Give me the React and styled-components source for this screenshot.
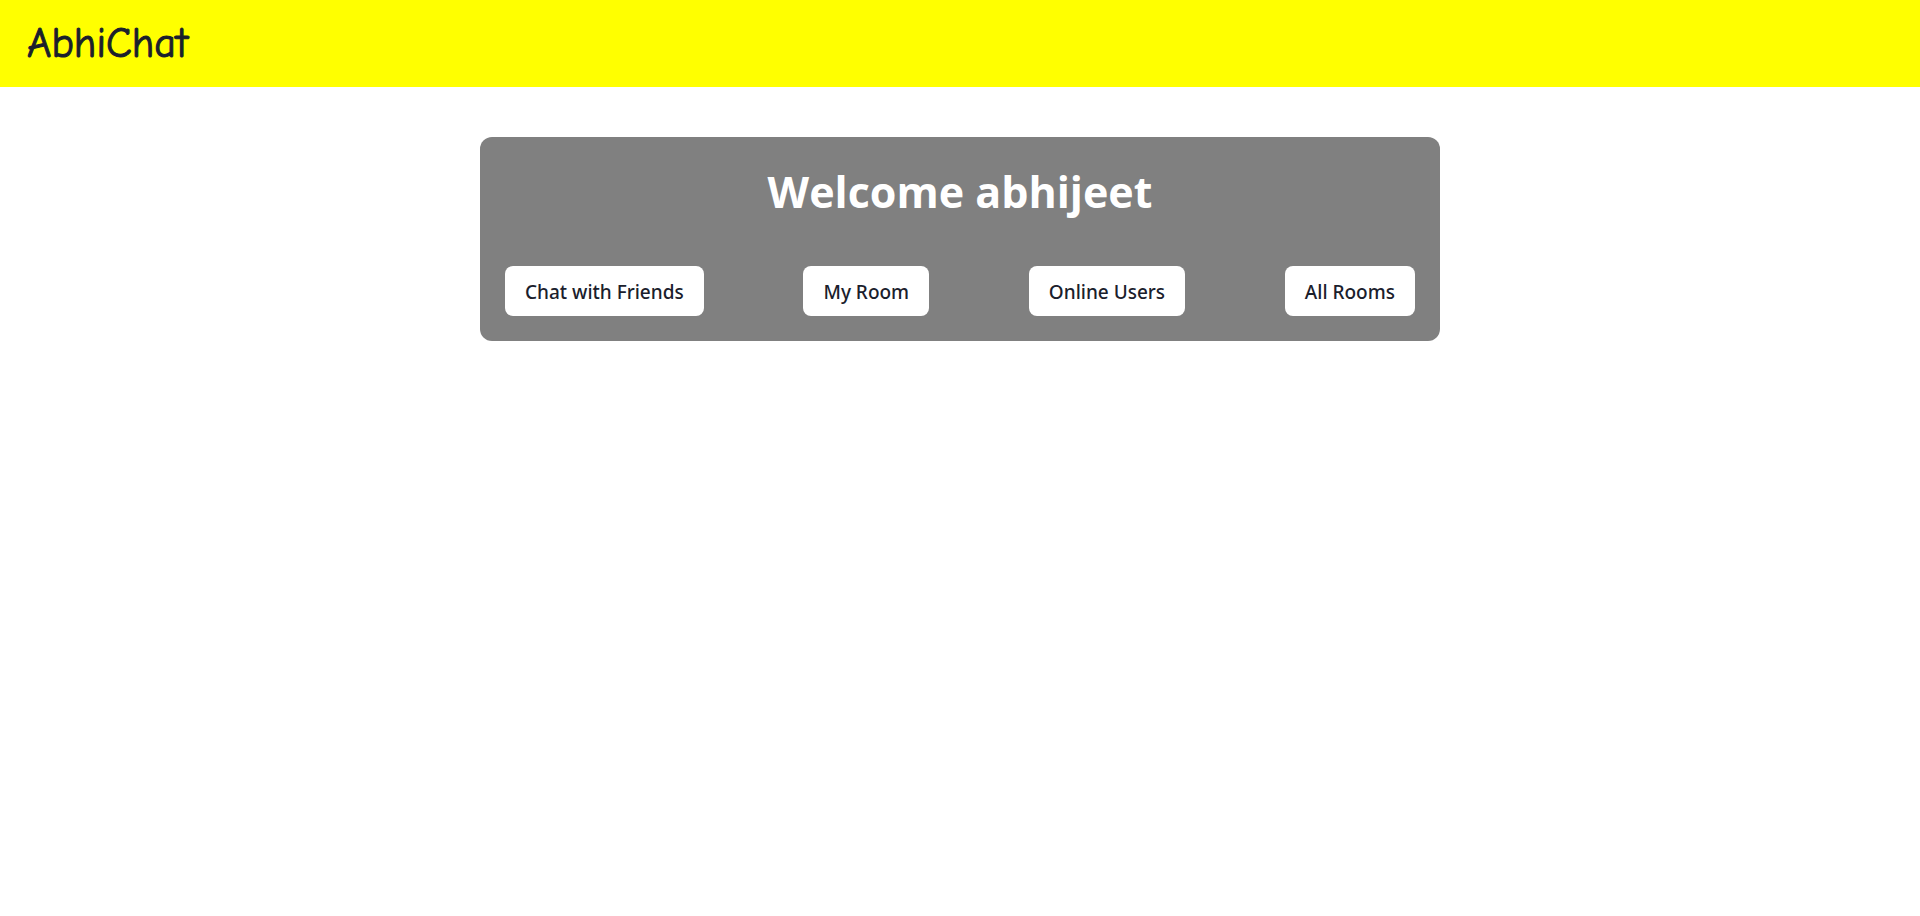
import React from "react";
import styled, { createGlobalStyle } from "styled-components";

const GlobalStyle = createGlobalStyle`
  *, *::before, *::after { box-sizing: border-box; }
  body {
    margin: 0;
    background: #fff;
    color: #1a202c;
    font-family: "Open Sans", "Noto Sans", sans-serif;
  }
`;

const Navbar = styled.header`
  display: flex;
  align-items: center;
  min-height: 87px;
  padding: 0 27px;
  background: #ffff00;
`;

const Brand = styled.a`
  color: #1a202c;
  font-family: "Comic Sans MS", "Comic Neue", cursive;
  font-size: 42px;
  line-height: 60px;
  text-decoration: none;
  -webkit-text-stroke: 1px currentColor;
`;

const Panel = styled.main`
  display: flex;
  flex-direction: column;
  gap: 44px;
  width: 50%;
  margin: 50px auto;
  padding: 25px;
  border-radius: 12px;
  background: #808080;
`;

const Title = styled.h1`
  margin: 0;
  color: #fff;
  font-size: 43px;
  font-weight: 700;
  line-height: 60px;
  text-align: center;
`;

const Actions = styled.nav`
  display: flex;
  flex-wrap: wrap;
  justify-content: space-between;
  gap: 20px;
`;

const ActionButton = styled.button`
  padding: 11px 20px 9px;
  border: 0;
  border-radius: 8px;
  background: #fff;
  color: #1a202c;
  font-family: "Noto Sans", sans-serif;
  font-size: 19px;
  font-weight: 500;
  line-height: 30px;
  cursor: pointer;
`;

const actions = ["Chat with Friends", "My Room", "Online Users", "All Rooms"];

export default function App() {
  return (
    <>
      <GlobalStyle />
      <Navbar>
        <Brand href="/">AbhiChat</Brand>
      </Navbar>
      <Panel>
        <Title>Welcome abhijeet</Title>
        <Actions>
          {actions.map((label) => (
            <ActionButton key={label} type="button">{label}</ActionButton>
          ))}
        </Actions>
      </Panel>
    </>
  );
}
